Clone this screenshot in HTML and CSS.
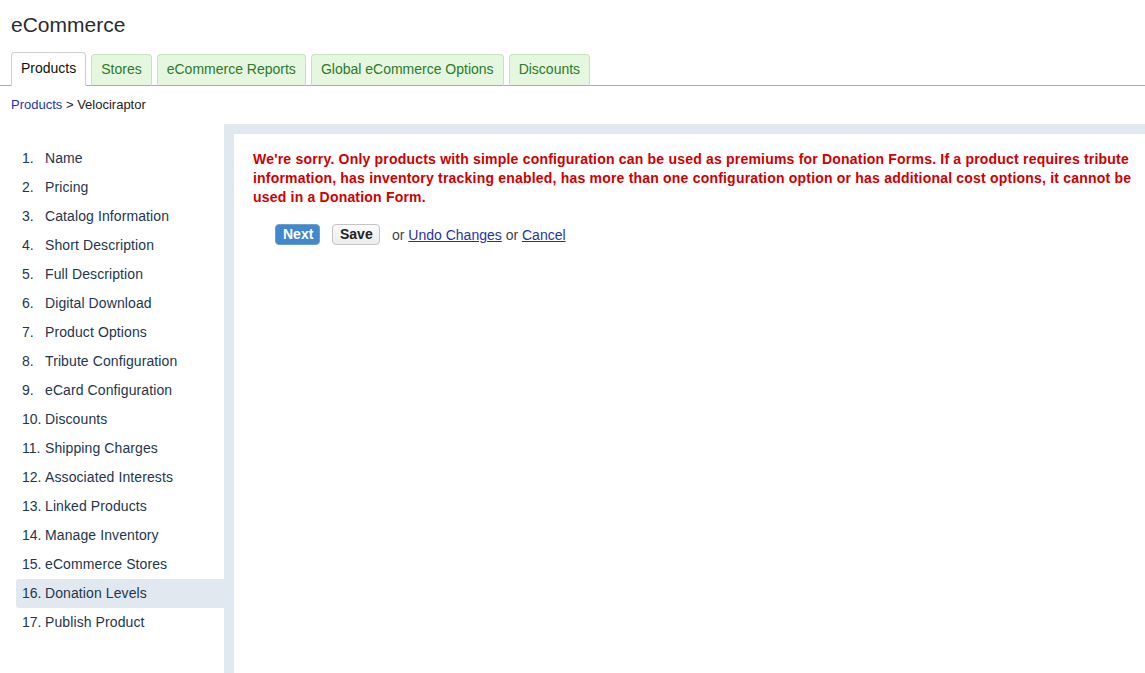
FILE: index.html
```html
<!DOCTYPE html>
<html>
<head>
<meta charset="utf-8">
<title>eCommerce</title>
<link rel="stylesheet" href="styles.css">
</head>
<body>
<div class="header">
  <h1 class="title">eCommerce</h1>
</div>
<div class="tabs">
  <a class="tab active">Products</a>
  <a class="tab">Stores</a>
  <a class="tab">eCommerce Reports</a>
  <a class="tab">Global eCommerce Options</a>
  <a class="tab">Discounts</a>
</div>
<div class="breadcrumb"><a class="link-plain" href="#">Products</a> &gt; Velociraptor</div>
<div class="main">
  <ul class="nav">
    <li class="nav-item"><span class="num">1.</span>Name</li>
    <li class="nav-item"><span class="num">2.</span>Pricing</li>
    <li class="nav-item"><span class="num">3.</span>Catalog Information</li>
    <li class="nav-item"><span class="num">4.</span>Short Description</li>
    <li class="nav-item"><span class="num">5.</span>Full Description</li>
    <li class="nav-item"><span class="num">6.</span>Digital Download</li>
    <li class="nav-item"><span class="num">7.</span>Product Options</li>
    <li class="nav-item"><span class="num">8.</span>Tribute Configuration</li>
    <li class="nav-item"><span class="num">9.</span>eCard Configuration</li>
    <li class="nav-item"><span class="num">10.</span>Discounts</li>
    <li class="nav-item"><span class="num">11.</span>Shipping Charges</li>
    <li class="nav-item"><span class="num">12.</span>Associated Interests</li>
    <li class="nav-item"><span class="num">13.</span>Linked Products</li>
    <li class="nav-item"><span class="num">14.</span>Manage Inventory</li>
    <li class="nav-item"><span class="num">15.</span>eCommerce Stores</li>
    <li class="nav-item current"><span class="num">16.</span>Donation Levels</li>
    <li class="nav-item"><span class="num">17.</span>Publish Product</li>
  </ul>
  <div class="panel">
    <p class="error">We're sorry. Only products with simple configuration can be used as premiums for Donation Forms. If a product requires tribute information, has inventory tracking enabled, has more than one configuration option or has additional cost options, it cannot be used in a Donation Form.</p>
    <div class="actions">
      <button class="btn btn-primary">Next</button>
      <button class="btn btn-default">Save</button>
      <span class="or">or <a href="#" class="link">Undo Changes</a> or <a href="#" class="link">Cancel</a></span>
    </div>
  </div>
</div>
</body>
</html>
```

FILE: styles.css
```css
html, body {
  margin: 0;
  padding: 0;
  background: #ffffff;
}
body {
  font-family: "Liberation Sans", Arial, sans-serif;
  color: #222;
}
.header {
  padding: 0 11px;
}
.title {
  margin: 13px 0 0;
  font-size: 21px;
  line-height: 24px;
  font-weight: normal;
  color: #2b2b2b;
}
.tabs {
  display: flex;
  align-items: flex-end;
  gap: 5px;
  margin-top: 15px;
  padding-left: 11px;
  height: 33px;
  border-bottom: 1px solid #acacac;
}
.tab {
  box-sizing: border-box;
  display: block;
  height: 32px;
  line-height: 28px;
  padding: 0 9px;
  margin-bottom: -1px;
  font-size: 14px;
  color: #2c7a2a;
  background: #e5f7de;
  border: 1px solid #c6e4bc;
  border-bottom-color: #acacac;
  border-radius: 4px 4px 0 0;
  white-space: nowrap;
}
.tab.active {
  height: 34px;
  line-height: 30px;
  padding: 0 9px;
  color: #111;
  background: #ffffff;
  border-color: #cfcfcf;
  border-bottom-color: #ffffff;
}
.breadcrumb {
  margin-top: 11px;
  padding-left: 11px;
  font-size: 13px;
  line-height: 16px;
  color: #222;
}
.link-plain {
  color: #2035b4;
  text-decoration: none;
}
.main {
  display: flex;
  margin-top: 11px;
  min-height: calc(100vh - 124px);
}
.nav {
  list-style: none;
  margin: 0;
  padding: 20px 0 0 16px;
  width: 208px;
  flex: none;
}
.nav-item {
  height: 29px;
  line-height: 29px;
  padding-left: 6px;
  font-size: 14px;
  letter-spacing: 0.1px;
  color: #233650;
  border-radius: 3px 0 0 3px;
  white-space: nowrap;
}
.nav-item.current {
  background: #e1e8f0;
}
.num {
  display: inline-block;
  width: 23px;
  letter-spacing: 0;
}
.panel {
  flex: 1;
  background: #ffffff;
  border-left: 10px solid #e1e8f0;
  border-top: 10px solid #e1e8f0;
  padding: 16px 6px 0 19px;
}
.error {
  margin: 0;
  font-size: 14px;
  line-height: 19px;
  letter-spacing: 0.2px;
  font-weight: bold;
  color: #d00000;
}
.actions {
  display: flex;
  align-items: center;
  margin-top: 17px;
  padding-left: 22px;
}
.btn {
  box-sizing: border-box;
  height: 21px;
  font-family: "Liberation Sans", Arial, sans-serif;
  font-size: 14px;
  font-weight: bold;
  line-height: 17px;
  border-radius: 4px;
  padding: 0 7px;
  margin: 0 12px 0 0;
  cursor: pointer;
}
.btn-primary {
  width: 45px;
  color: #ffffff;
  background: #4189ca;
  border: 1px solid #6a9fd0;
}
.btn-default {
  width: 48px;
  color: #222;
  background: linear-gradient(#fbfbfb, #ececec);
  border: 1px solid #c4c4c4;
}
.or {
  font-size: 14px;
  color: #444;
}
.link {
  color: #1f33a8;
  text-decoration: underline;
}
```
